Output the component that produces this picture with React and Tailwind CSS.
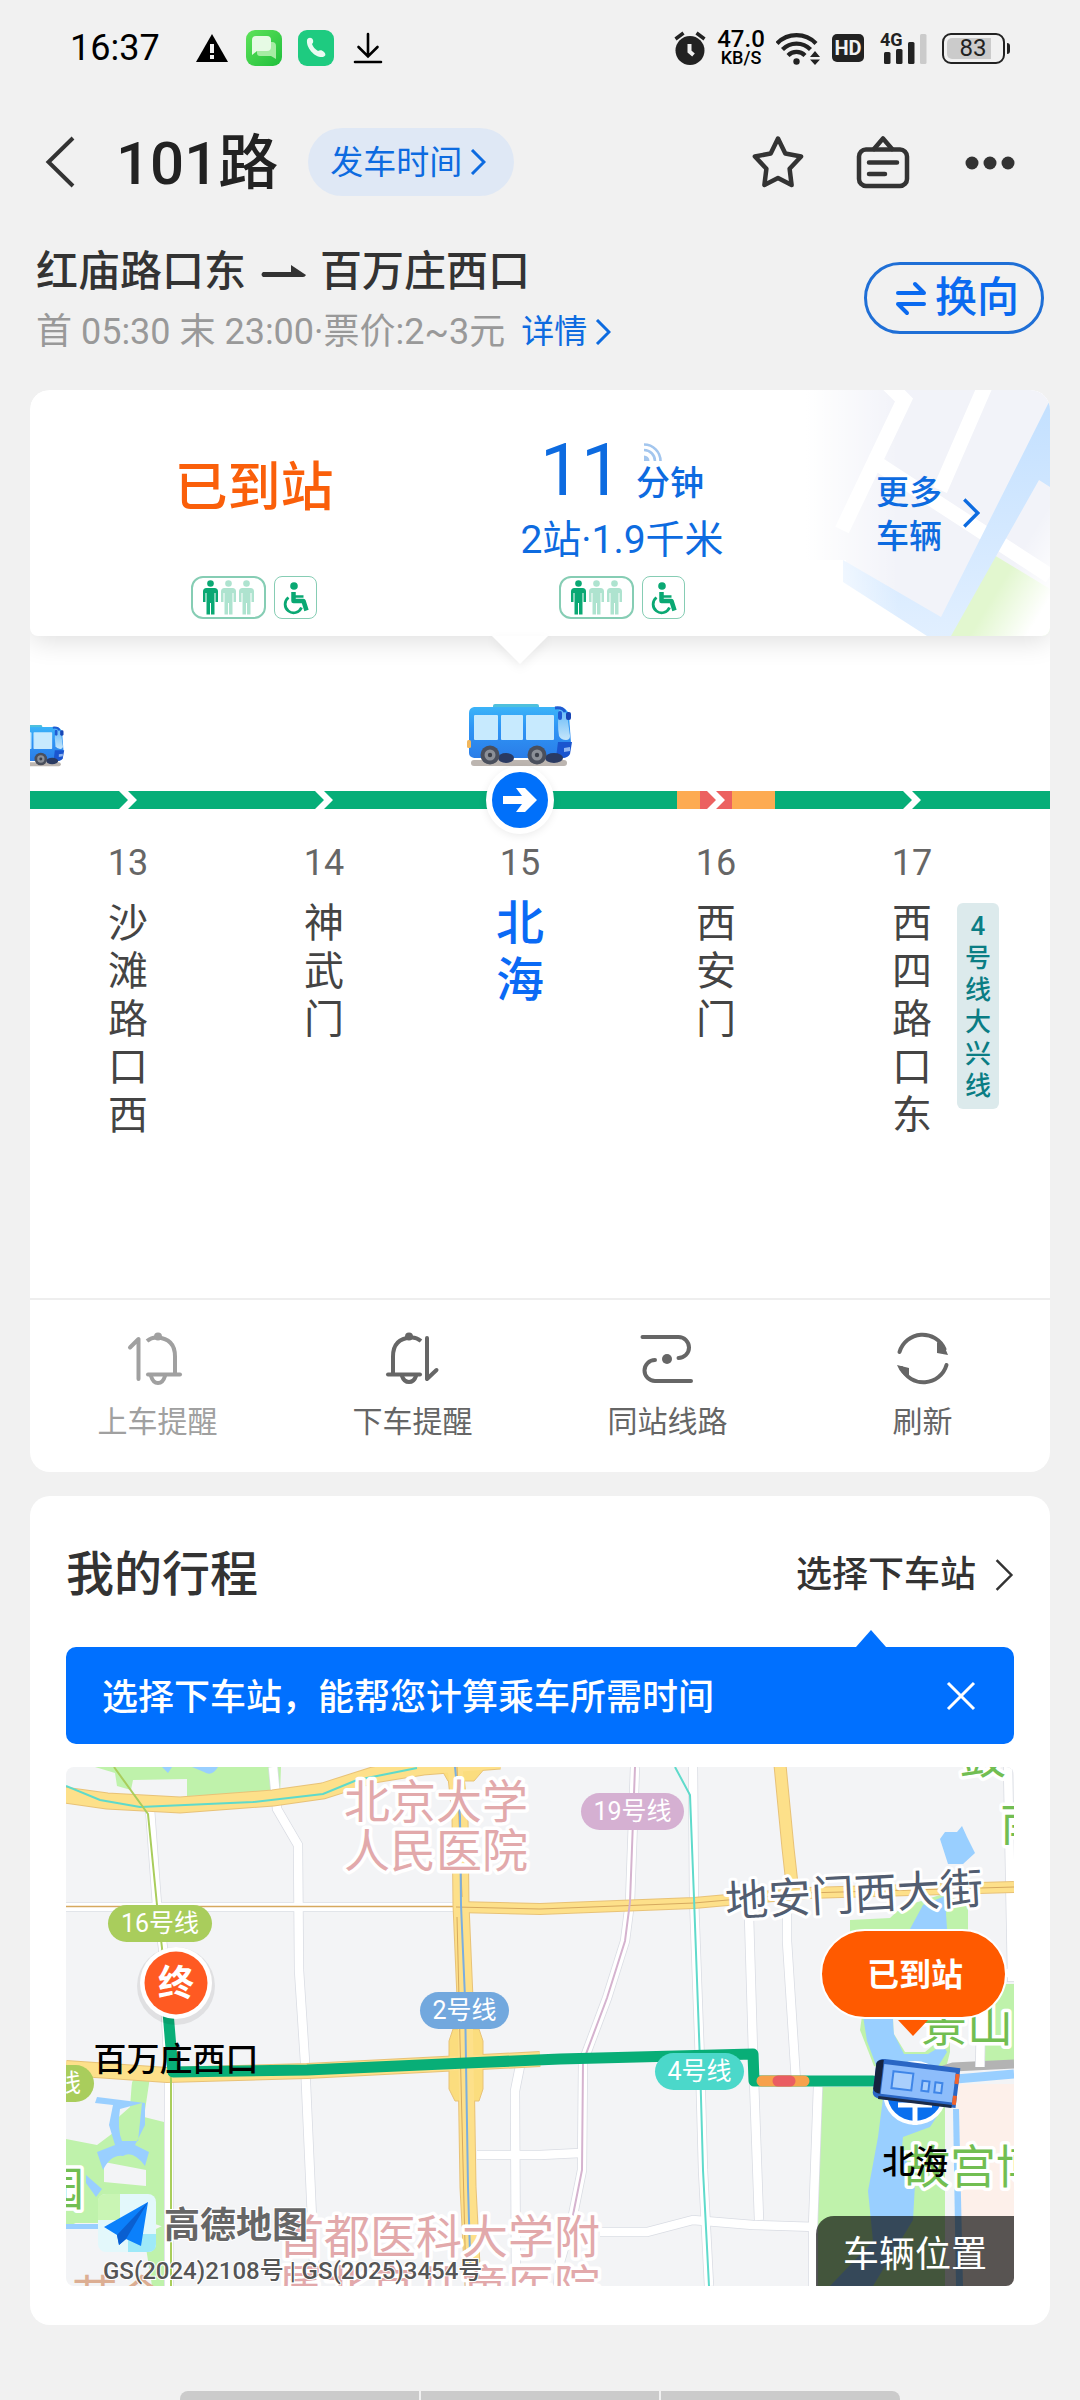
import React from "react";

const font = { fontFamily: 'Roboto, "Noto Sans CJK SC", sans-serif' };

function Chevron({ className, width = 3 }) {
  return (
    <svg viewBox="0 0 16 26" className={className} fill="none" stroke="currentColor" strokeWidth={width} aria-hidden="true">
      <path d="M2 1l12 12L2 25" />
    </svg>
  );
}

function StatusBar() {
  return (
    <div className="flex h-24 items-center justify-between pr-[70px] pl-[70px] text-black">
      <div className="flex items-center">
        <span className="text-[36px] leading-[40px]">16:37</span>
        <svg viewBox="0 0 32 28" className="ml-9 h-7 w-8" aria-hidden="true">
          <path d="M16 0l16 28H0z" fill="#000" />
          <path d="M14 10h4v9h-4zM14 21h4v4h-4z" fill="#f1f1f1" />
        </svg>
        <svg viewBox="0 0 36 36" className="ml-[18px] h-9 w-9" aria-hidden="true">
          <defs>
            <linearGradient id="msg" x1="0" y1="0" x2="1" y2="1">
              <stop offset="0" stopColor="#5fe35a" />
              <stop offset="1" stopColor="#1fbf3c" />
            </linearGradient>
          </defs>
          <rect width="36" height="36" rx="9" fill="url(#msg)" />
          <path d="M14 12h12q4 0 4 4v13l-5-3H14q-3 0-3-3v-8q0-3 3-3z" fill="#a6eca3" />
          <path d="M10 6h11q4 0 4 4v7q0 4-4 4H11l-5 4V10q0-4 4-4z" fill="#e6fae4" />
        </svg>
        <svg viewBox="0 0 36 36" className="ml-4 h-9 w-9" aria-hidden="true">
          <rect width="36" height="36" rx="9" fill="#1ecb80" />
          <path d="M9 10c1-3 5-3 6 0 .5 2 0 3-1 4 1 3 3 5 6 7 2-1 4-1 6 1s2 4-1 5c-8 1-17-9-16-17z" fill="#e9fbf2" />
        </svg>
        <svg viewBox="0 0 30 32" className="ml-[19px] h-8 w-[30px]" fill="none" stroke="#000" strokeWidth="2.6" strokeLinecap="round" aria-hidden="true">
          <path d="M15 2v22M5.500 15L15 24.500 24.500 15M2 30h26" />
        </svg>
      </div>
      <div className="flex items-center">
        <svg viewBox="0 0 32 34" className="h-[34px] w-8" aria-hidden="true">
          <circle cx="16" cy="19.500" r="14.500" fill="#222" />
          <path d="M1.500 8l8-6M30.500 8l-8-6" stroke="#222" strokeWidth="3.500" />
          <path d="M15.500 13v7.500l4 3.500" stroke="#f1f1f1" strokeWidth="4" fill="none" />
        </svg>
        <div className="ml-3 flex w-[46px] flex-col items-center font-medium">
          <span className="text-[24px] leading-[20px]">47.0</span>
          <span className="text-[18px] leading-[18px]">KB/S</span>
        </div>
        <svg viewBox="0 0 44 34" className="ml-3 h-[34px] w-11" aria-hidden="true">
          <g fill="none" stroke="#222" strokeWidth="4.200">
            <path d="M1 12.500a27 27 0 0 1 39 0" />
            <path d="M6.500 18.500a19.500 19.500 0 0 1 28 0" />
            <path d="M12 24.500a12 12 0 0 1 17 0" />
          </g>
          <circle cx="20.500" cy="30.500" r="3.200" fill="#222" />
          <path d="M34 26l5-6 5 6zM34 28.500l5 5.500 5-5.500z" fill="#222" />
        </svg>
        <span className="ml-3 flex h-7 w-8 items-center justify-center rounded-[5px] bg-[#222] text-[20px] leading-none font-bold text-[#f1f1f1]">HD</span>
        <div className="relative ml-4 h-8 w-12">
          <span className="absolute top-0 left-0 text-[18px] leading-[16px] font-bold text-[#222]">4G</span>
          <svg viewBox="0 0 48 32" className="h-8 w-12" aria-hidden="true">
            <g fill="#222">
              <rect x="4" y="20" width="6.500" height="12" rx="1.500" />
              <rect x="16" y="17" width="6.500" height="15" rx="1.500" />
              <rect x="28" y="10" width="6.500" height="22" rx="1.500" />
            </g>
            <rect x="40" y="2" width="6.500" height="30" rx="1.500" fill="#cbcbcb" />
          </svg>
        </div>
        <div className="ml-[14px] flex items-center">
          <span className="flex h-[31px] w-[63px] items-center rounded-[9px] border-2 border-[#222] p-[3px]">
            <span className="flex h-full w-[44px] items-center justify-center rounded-l-[5px] bg-[#cbcbcb] pl-2 text-[24px] leading-none text-[#222]">83</span>
          </span>
          <span className="ml-[2px] h-[11px] w-[3px] rounded-r bg-[#222]" />
        </div>
      </div>
    </div>
  );
}

function Header() {
  return (
    <header className="mt-8 flex h-[68px] items-center pr-[60px] pl-11 text-[#333]">
      <button aria-label="返回" className="flex h-14 w-8 items-center">
        <svg viewBox="0 0 32 56" className="h-14 w-8" fill="none" stroke="currentColor" strokeWidth="4" aria-hidden="true">
          <path d="M29 4L4.500 28 29 52" />
        </svg>
      </button>
      <h1 className="ml-10 pt-1 text-[60px] leading-[64px] font-medium text-[#222]">101路</h1>
      <button className="ml-[30px] flex h-[68px] items-center rounded-full bg-[#dfe8f5] pr-7 pl-[22px] text-[33px] leading-[40px] text-[#0d6be0]">
        <span className="pt-[2px]">发车时间</span>
        <Chevron className="ml-2 h-[26px] w-4" />
      </button>
      <div className="ml-auto flex items-center">
        <button aria-label="收藏">
          <svg viewBox="0 0 52 54" className="h-[54px] w-[52px]" fill="none" stroke="currentColor" strokeWidth="4.500" strokeLinejoin="round" aria-hidden="true">
            <path d="M26 3.500l7.300 15 15.800 3-11.500 12.200 2 16.300L26 43 12.400 50l2-16.300L2.900 21.500l15.800-3z" />
          </svg>
        </button>
        <button aria-label="站牌" className="ml-[52px]">
          <svg viewBox="0 0 54 54" className="h-[54px] w-[54px]" fill="none" stroke="currentColor" strokeWidth="4.500" strokeLinecap="round" strokeLinejoin="round" aria-hidden="true">
            <rect x="3" y="14.500" width="48" height="36.500" rx="7" />
            <path d="M18 14l9-10.500L36 14M13 27.500h28M13 39h16" />
          </svg>
        </button>
        <button aria-label="更多" className="ml-[50px]">
          <svg viewBox="0 0 60 54" className="h-[54px] w-[60px]" fill="currentColor" aria-hidden="true">
            <circle cx="12" cy="28" r="6.500" />
            <circle cx="30" cy="28" r="6.500" />
            <circle cx="48" cy="28" r="6.500" />
          </svg>
        </button>
      </div>
    </header>
  );
}

function RouteInfo() {
  return (
    <section className="mt-12 flex items-center justify-between pr-9 pl-9">
      <div>
        <h2 className="flex items-center pt-1 text-[42px] leading-[48px] font-medium text-[#333]">
          红庙路口东
          <svg viewBox="0 0 46 14" className="mx-[14px] h-[14px] w-[46px]" fill="currentColor" aria-hidden="true">
            <path d="M3 7h28V0l15 10q-1 2-3 2H3q-3-2.500 0-5z" />
          </svg>
          百万庄西口
        </h2>
        <p className="mt-4 flex items-center text-[36px] leading-[40px] text-[#999]">
          首 05:30 末 23:00·票价:2~3元
          <a href="#detail" className="ml-4 flex items-center text-[33px] text-[#0d6be0]">
            详情
            <Chevron className="ml-2 h-[26px] w-4" />
          </a>
        </p>
      </div>
      <button className="flex h-[72px] items-center rounded-full border-[3px] border-[#1f6fd6] pr-[22px] pl-[28px] text-[42px] leading-[48px] font-medium text-[#0a6af0]">
        <svg viewBox="0 0 32 36" className="mr-2 h-9 w-8" fill="none" stroke="currentColor" strokeWidth="4" strokeLinecap="round" strokeLinejoin="round" aria-hidden="true">
          <path d="M3 13h26l-9-9M29 24H3l9 9" />
        </svg>
        换向
      </button>
    </section>
  );
}

function Person({ x, color }) {
  return (
    <g fill={color} transform={`translate(${x} 0)`}>
      <circle cx="7.500" cy="3.500" r="3.300" />
      <path d="M3.500 8h8q3.500 0 3.500 3.500V22h-2.500v-9h-1v21.500H8V23H7v11.500H3.500V13h-1v9H0V11.500Q0 8 3.500 8z" />
    </g>
  );
}

function Badges() {
  return (
    <div className="flex items-center gap-2">
      <span className="flex h-[43px] w-[75px] items-center justify-center rounded-xl border-2 border-[#86cdb4]">
        <svg viewBox="0 0 51 36" className="h-9 w-[51px]" role="img" aria-label="车厢舒适">
          <Person x={0} color="#0aa873" />
          <Person x={18} color="#aee3cf" />
          <Person x={36} color="#aee3cf" />
        </svg>
      </span>
      <span className="flex h-[43px] w-[43px] items-center justify-center rounded-lg border border-[#86cdb4]">
        <svg viewBox="0 0 26 34" className="h-[34px] w-[26px]" fill="none" stroke="#0aa873" role="img" aria-label="无障碍">
          <circle cx="11" cy="5" r="3.800" fill="#0aa873" stroke="none" />
          <path d="M10.500 11v9h10l3 9.500" strokeWidth="4.500" strokeLinejoin="round" />
          <path d="M12 15.500h8.500" strokeWidth="2.500" />
          <path d="M5.500 16.500a8.500 8.500 0 1 0 13 10" strokeWidth="2.800" />
        </svg>
      </span>
    </div>
  );
}

function Arrivals() {
  return (
    <div className="relative flex h-[246px] rounded-b-lg bg-white pl-10 shadow-[0_4px_28px_rgba(0,0,0,0.14)]">
      <div className="flex flex-1 flex-col items-center justify-end pb-[17px]">
        <strong className="text-[53px] leading-[64px] font-medium text-[#fa5f0a]">已到站</strong>
        <div className="mt-14">
          <Badges />
        </div>
      </div>
      <div className="flex flex-1 flex-col items-center justify-end pb-[17px] text-[#0d6be0]">
        <div className="flex items-baseline">
          <span className="text-[73px] leading-[72px]">11</span>
          <span className="relative ml-[14px] text-[34px] leading-[40px] font-medium">
            分钟
            <svg viewBox="0 0 18 18" className="absolute bottom-full left-2 mb-[2px] h-[18px] w-[18px]" fill="none" stroke="#a3c6ee" strokeWidth="2.600" aria-hidden="true">
              <path d="M0 1.500A16.500 16.500 0 0 1 16.500 18M0 7a11 11 0 0 1 11 11" />
              <path d="M0 12.500A5.500 5.500 0 0 1 5.500 18H0z" fill="#a3c6ee" stroke="none" />
            </svg>
          </span>
        </div>
        <p className="mt-3 text-[39px] leading-[44px]">2站·1.9千米</p>
        <div className="mt-[14px]">
          <Badges />
        </div>
      </div>
      <button className="relative flex w-[244px] items-center overflow-hidden rounded-br-lg pl-[70px] text-left text-[#0d6be0]">
        <svg viewBox="0 0 244 246" className="absolute inset-0 h-full w-full" preserveAspectRatio="none" aria-hidden="true">
          <defs>
            <linearGradient id="fade" x1="0" x2="1">
              <stop offset="0" stopColor="#fff" />
              <stop offset="0.380" stopColor="#fff" stopOpacity="0" />
            </linearGradient>
            <linearGradient id="corner" x1="0.400" x2="1" y1="0.500" y2="1">
              <stop offset="0.300" stopColor="#fff" stopOpacity="0" />
              <stop offset="0.800" stopColor="#fff" />
            </linearGradient>
            <linearGradient id="band" x1="0" x2="0" y1="0" y2="1">
              <stop offset="0" stopColor="#c3e0ff" />
              <stop offset="1" stopColor="#e1efff" />
            </linearGradient>
          </defs>
          <rect width="244" height="246" fill="#f2f3f9" />
          <path d="M37 190l107 56H37zM0 170h40v76H0z" fill="#fff" />
          <path d="M188 165l56 34v47H140z" fill="#e2f7cf" />
          <path d="M78 -10l20 20L36 140M180 -6L134 100M72 74l172 112" fill="none" stroke="#fff" strokeWidth="15" />
          <path d="M150 150l94-60v156H130z" fill="url(#corner)" />
          <path d="M244 10L135 227 37 170v22l84 54h24L233 90l11 7z" fill="url(#band)" />
          <rect width="244" height="246" fill="url(#fade)" />
        </svg>
        <span className="relative w-[66px] pt-1 text-[33px] leading-[44px] font-medium">更多车辆</span>
        <Chevron className="relative ml-5 h-[30px] w-[18px]" />
      </button>
    </div>
  );
}

function Bus({ className }) {
  return (
    <svg viewBox="0 0 106 63" className={className} aria-hidden="true">
      <defs>
        <linearGradient id="bus" x1="0" x2="0" y1="0" y2="1">
          <stop offset="0" stopColor="#3bb4f8" />
          <stop offset="0.400" stopColor="#2f95f5" />
          <stop offset="1" stopColor="#2a7de8" />
        </linearGradient>
        <linearGradient id="shield" x1="0" x2="0" y1="0" y2="1">
          <stop offset="0" stopColor="#62b8f7" />
          <stop offset="1" stopColor="#c5e6fb" />
        </linearGradient>
      </defs>
      <rect x="4" y="56" width="96" height="6" rx="3" fill="#bcb5b0" />
      <rect x="26" y="0" width="46" height="6" rx="2" fill="#4fc0dc" />
      <path d="M7 3h84q9 0 11 8l2 28-3 12q-2 3-6 3H7q-5-1-5-5V9q0-5 5-6z" fill="url(#bus)" />
      <path d="M91 38h14l-2 12q-2 4-8 4h-6z" fill="#1a55cf" />
      <path d="M92 5l8 5 3 22q0 4-4 4-5 0-7-4-2-12 0-27z" fill="url(#shield)" />
      <path d="M88 4q8-1 10 4" stroke="#1f5bd2" strokeWidth="3" fill="none" />
      <rect x="99" y="8" width="5" height="8" rx="2" fill="#1746b5" />
      <rect x="91" y="7" width="4" height="9" rx="2" fill="#1f5bd2" />
      <path d="M8 12h22v23H8zM35 12h20v23H35zM60 12h26v23H60z" fill="#c7eafe" stroke="#c7eafe" strokeWidth="2" strokeLinejoin="round" />
      <rect x="0" y="36" width="4" height="8" rx="1.500" fill="#f2b75c" />
      <path d="M97 44l6-1v4l-6 1z" fill="#8fb5f2" />
      <ellipse cx="39" cy="54" rx="8" ry="5" fill="#2a3a62" />
      <ellipse cx="87" cy="54" rx="9" ry="5" fill="#2a3a62" />
      <circle cx="23" cy="51" r="9.500" fill="#4a4f5c" />
      <circle cx="23" cy="51" r="5.500" fill="#8b8f97" />
      <circle cx="23" cy="51" r="2.200" fill="#3c404a" />
      <circle cx="70" cy="51" r="9.500" fill="#4a4f5c" />
      <circle cx="70" cy="51" r="5.500" fill="#8b8f97" />
      <circle cx="70" cy="51" r="2.200" fill="#3c404a" />
    </svg>
  );
}

const stations = [
  { no: 13, name: "沙滩路口西" },
  { no: 14, name: "神武门" },
  { no: 15, name: "北海", current: true },
  { no: 16, name: "西安门", slow: true },
  { no: 17, name: "西四路口东", metro: "4号线大兴线" },
];

function Track({ station }) {
  return (
    <div className="relative flex h-[18px] flex-1 items-center justify-center bg-[#06ae78]">
      {station.slow && (
        <div className="absolute inset-y-0 left-[30%] flex w-1/2 bg-[#fdab52] pl-[23px]">
          <span className="w-8 bg-[#ec6160]" />
        </div>
      )}
      {station.current ? (
        <span className="absolute flex h-[68px] w-[68px] items-center justify-center rounded-full border-[6px] border-white bg-[#0070fa] shadow-[0_2px_8px_rgba(0,0,0,0.08)]">
          <svg viewBox="0 0 36 28" className="h-7 w-9" fill="#fff" aria-hidden="true">
            <path d="M1 10h19l-6-8h9l12 12-12 12h-9l6-8H1z" />
          </svg>
        </span>
      ) : (
        <svg viewBox="0 0 18 18" className="relative h-[18px] w-[18px]" fill="#fff" aria-hidden="true">
          <path d="M0 0h9l9 9-9 9H0l9-9z" />
        </svg>
      )}
    </div>
  );
}

function Stations() {
  return (
    <div className="relative">
      <div className="relative flex justify-center pr-10">
        <svg viewBox="0 0 56 28" className="h-7 w-14 drop-shadow-[0_4px_5px_rgba(0,0,0,0.06)]" fill="#fff" aria-hidden="true">
          <path d="M0 0h56L28 28z" />
        </svg>
      </div>
      <div className="relative mt-10 flex h-[63px] items-end justify-center overflow-hidden pr-10">
        <Bus className="absolute bottom-0 -left-9 h-[42px] w-[71px]" />
        <Bus className="h-[63px] w-[106px]" />
      </div>
      <div className="mt-6 flex">
        {stations.map((s) => (
          <Track key={s.no} station={s} />
        ))}
        <span className="w-10 bg-[#06ae78]" />
      </div>
      <ol className="flex pr-10 pb-[158px]">
        {stations.map((s) => (
          <li key={s.no} className="relative flex flex-1 flex-col items-center pt-[34px]">
            <span className="text-[36px] leading-[40px] text-[#666]">{s.no}</span>
            {s.current ? (
              <span className="mt-3 w-12 text-[48px] leading-[57px] font-medium break-all text-[#0a6af5]">{s.name}</span>
            ) : (
              <span className="mt-[17px] w-10 text-[40px] leading-[48px] break-all text-[#444]">{s.name}</span>
            )}
            {s.metro && (
              <span className="absolute top-[94px] left-1/2 ml-[45px] w-[42px] rounded-md bg-[#dceaec] px-2 py-[7px] text-center text-[26px] leading-8 font-medium break-all text-[#0a7d84]">
                {s.metro}
              </span>
            )}
          </li>
        ))}
      </ol>
    </div>
  );
}

const bellOn = (
  <g>
    <path d="M0 15.500L8.500 7v40" strokeLinejoin="round" />
    <path d="M17 9q5-4 10-3.500 18 1 18 19V42" strokeLinecap="butt" />
    <path d="M18 42.500h32" />
    <path d="M21 44q2 7 7 7t7-7" />
    <circle cx="28" cy="4.500" r="2" />
  </g>
);
const bellOff = (
  <g>
    <path d="M51.500 38L42 47V6" strokeLinejoin="round" />
    <path d="M36 9q-5-4-10-3.500-18 1-18 19V42" strokeLinecap="butt" />
    <path d="M35 42.500H3" />
    <path d="M17 44q2 6 7 6t7-6" />
    <circle cx="24" cy="4.500" r="2" />
  </g>
);
const sameStop = (
  <g>
    <path d="M2.500 5h36a10.500 10.500 0 0 1 0 21M15 28a10.500 10.500 0 0 0 0 21h36" />
    <circle cx="27" cy="27" r="5" fill="currentColor" stroke="none" />
  </g>
);
const refresh = (
  <g>
    <path d="M4.500 20a24 24 0 0 1 45-3M51.500 33a24 24 0 0 1-45 3" />
    <path d="M42 10v11l11 2q-3-10-11-13zM14 46V36L2 33q4 10 12 13z" fill="currentColor" stroke="none" />
  </g>
);

const actions = [
  { label: "上车提醒", icon: bellOn, muted: true },
  { label: "下车提醒", icon: bellOff },
  { label: "同站线路", icon: sameStop },
  { label: "刷新", icon: refresh },
];

function Actions() {
  return (
    <div className="grid grid-cols-4 border-t-2 border-[#eeeeee] pt-8 pb-[30px]">
      {actions.map((a) => (
        <button key={a.label} className={a.muted ? "flex flex-col items-center text-[#a0a0a0]" : "flex flex-col items-center text-[#666]"}>
          <svg viewBox="0 0 56 56" className="h-14 w-14 overflow-visible" fill="none" stroke="currentColor" strokeWidth="4" strokeLinecap="round" aria-hidden="true">
            {a.icon}
          </svg>
          <span className="mt-[14px] text-[30px] leading-[40px]">{a.label}</span>
        </button>
      ))}
    </div>
  );
}

function LinePill({ x, y, w, color, children }) {
  return (
    <g>
      <rect x={x} y={y} width={w} height="37" rx="18.500" fill={color} />
      <text x={x + w / 2} y={y + 27} textAnchor="middle" fontSize="25" fill="#fff">
        {children}
      </text>
    </g>
  );
}

const whiteRoads = [
  "M0 140H390",
  "M207 0l4 42 21 36 1 125 6 92 10 224",
  "M84 42l7 96 6 43 6 132v206",
  "M454 299l-5 25 1 195",
  "M411 388h63l40-2",
  "M569 0l-5 135-5 39-18 57-24 64-1 108-10 50-12 42-2 24",
  "M627 0l1 131 6 164 3 108 6 116",
  "M683 149l4 136 6 168",
  "M721 140v34l9 140",
  "M752 320l-5 140v59",
  "M534 465h47l46-12 60 5 63 2",
  "M942 0l2 106 2 104h10M946 206h-30l-2 94",
];

function RouteMap() {
  return (
    <svg viewBox="0 0 948 519" className="h-[519px] w-full" preserveAspectRatio="xMidYMid slice" role="img" aria-label="线路地图">
      <rect width="948" height="519" fill="#f3f4f6" />

      <g fill="#bff2ab">
        <path d="M29 0h186l-1 27-93 2v-17l-54 1-2 10-14-4-2-13z" />
        <path d="M784 153l40-2 12-11 38-12 28 7v32H784z" />
        <path d="M796 249l-2 14 14 36 30 10h40l6-24v-36z" />
        <path d="M752 320h127v199H747z" />
        <path d="M919 217h29v80h-29z" />
        <path d="M0 372l31 6 16-12 20-53 17-3-6 40 20 5v105l-54-18-44 18z" />
        <path d="M0 440h40v16H0zM78 468l24-12v63H86z" />
      </g>
      <path d="M50 310l16 4-2 26-16 14-24-2 8-10zM38 395l42 8v16l-42-4z" fill="#f3f4f6" />
      <path d="M892 317h56v202h-56z" fill="#fdf0ea" />

      <g fill="#99cfff">
        <path d="M96 0l10 0-4 6zM126 0h26q-6 10-14 5z" />
        <path d="M874 72l5-7h12l5-6 5 11 8 16-12 11h-15z" />
        <path d="M844 162l13-24 22-9 2 33z" />
        <path d="M797 249h30l1 18 10 20h24l15-9 4 7-10 16h-60l-10-27z" />
        <path d="M817 331l57 14-10 15-27 10-1 11 13 36-2 36-40 66h-43l43-45-5-50 10-54z" />
        <path d="M887 342l6 0 4 177h-7z" />
        <path d="M31 330l48 6 0 22-10 20 14 7-4 14q-12-16-22-10-12-2-20 14l-6-18 18-7-6-20 4-20-18-2zM54 342q-3 20 2 32h16l4-38z" fillRule="evenodd" />
        <path d="M20 408l16 14-6 8-10-14zM0 457h34v5H0z" />
      </g>
      <path d="M827 251h36l8 24-12 10h-20l-11-18z" fill="#f3f4f6" />
      <path d="M890 312l58-5" stroke="#99cfff" strokeWidth="9" fill="none" />
      <path d="M874 304l13-4 61-3" stroke="#b3b3b3" strokeWidth="9" fill="none" />

      <g fill="none" stroke="#d9dce3" strokeWidth="10">
        {whiteRoads.map((d) => (
          <path key={d} d={d} />
        ))}
      </g>
      <g fill="none" stroke="#fff" strokeWidth="8.500">
        {whiteRoads.map((d) => (
          <path key={d} d={d} />
        ))}
      </g>
      <path d="M0 139.500h390" stroke="#d6a95f" strokeWidth="1.500" />

      <g fill="none" stroke="#e8c277">
        <path d="M-2 28l43 6 73 4 93-7 50-7 50-16 50-8 77-6" strokeWidth="17" />
        <path d="M389 0l5 49 1 89 4 93 1 64 2 125 5 99" strokeWidth="17" />
        <path d="M390 140l84 2 154-6 113-10 207-6" strokeWidth="12" />
        <path d="M714 -2l8 83 4 36" strokeWidth="13" />
        <path d="M0 301l101 7 140-4 233-12" strokeWidth="16" />
      </g>
      <path d="M387 262l-4 12v48l6 12h24l4-12v-48l-4-12zM374 0h46l-12 14h-26z" fill="#fbdd7e" stroke="#e8c277" />
      <g fill="none" stroke="#fde08a">
        <path d="M-2 28l43 6 73 4 93-7 50-7 50-16 50-8 77-6" strokeWidth="15" />
        <path d="M389 0l5 49 1 89 4 93 1 64 2 125 5 99" strokeWidth="15" />
        <path d="M390 140l84 2 154-6 113-10 207-6" strokeWidth="10" />
        <path d="M714 -2l8 83 4 36" strokeWidth="11" />
        <path d="M0 301l101 7 140-4 233-12" strokeWidth="14" />
      </g>
      <path d="M390 140l84 2 154-6 113-10 207-6M391 0l5 130M391 150l9 369" fill="none" stroke="#d6a95f" strokeWidth="1" />

      <g fill="none" strokeWidth="2">
        <path d="M0 19l34 14 40 7 113-5 70-8 34-14 60-12M609 0l15 28 4 103 6 164 3 108 6 116" stroke="#5fdacb" />
        <path d="M48 0l34 47 9 91 5 43 9 132v206" stroke="#a9cd5c" />
        <path d="M389 0l5 49 1 89 4 93 1 64 2 125 3 99" stroke="#7aaee0" />
        <path d="M569 0l-5 135-5 39-18 57-24 64-1 108-10 50" stroke="#d5b3cf" />
      </g>

      <g fontSize="46" fill="#e2a9ab" stroke="#fff" strokeWidth="7" strokeLinejoin="round" paintOrder="stroke">
        <text x="278" y="51">北京大学</text>
        <text x="278" y="100">人民医院</text>
        <text x="212" y="486">首都医科大学附</text>
        <text x="212" y="536">属北京儿童医院</text>
      </g>
      <g fontSize="46" fill="#72be52" stroke="#fff" strokeWidth="7" strokeLinejoin="round" paintOrder="stroke">
        <text x="855" y="274">景山</text>
        <text x="838" y="416">故宫博</text>
        <text x="894" y="6">鼓</text>
        <text x="934" y="73">南</text>
        <text x="-28" y="438">园</text>
      </g>
      <text x="6" y="546" fontSize="46" fill="#dcae93">艺会</text>
      <text x="788" y="143" fontSize="43" fill="#525d70" stroke="#fff" strokeWidth="6" strokeLinejoin="round" paintOrder="stroke" textAnchor="middle" transform="rotate(-3 788 127)">
        地安门西大街
      </text>

      <g fill="none" strokeWidth="11" strokeLinejoin="round" strokeLinecap="round">
        <path d="M102 245l5 60 134-2 159-7 94-4 193-5 1 27h119" stroke="#08ae77" />
        <path d="M696 314h42" stroke="#f7a14b" />
        <path d="M712 314h12" stroke="#ea5d62" />
      </g>

      <LinePill x={42} y={138} w={104} color="#a9cd5c">16号线</LinePill>
      <LinePill x={354} y={225} w={89} color="#72a8de">2号线</LinePill>
      <LinePill x={515} y={26} w={103} color="#d5b0d2">19号线</LinePill>
      <LinePill x={589} y={286} w={89} color="#4bd8ca">4号线</LinePill>
      <LinePill x={-76} y={298} w={104} color="#a9cd5c">16号线</LinePill>

      <circle cx="110" cy="219" r="39" fill="#000" opacity="0.080" />
      <circle cx="110" cy="216" r="36" fill="#fff" />
      <circle cx="110" cy="216" r="31.500" fill="#ff5a22" />
      <text x="110" y="229" fontSize="36" fontWeight="700" fill="#fff" textAnchor="middle">终</text>
      <text x="110" y="304" fontSize="33" fontWeight="500" fill="#000" textAnchor="middle">百万庄西口</text>

      <circle cx="849" cy="326" r="32" fill="#fff" />
      <circle cx="849" cy="326" r="28" fill="#0a6fee" />
      <path d="M849 334v24M832 338h34" stroke="#fff" strokeWidth="5" />
      <g transform="translate(850 318) rotate(7)">
        <path d="M-42 -17q2-5 8-5h76v40h-76q-7 0-8-5z" fill="#2a66c4" />
        <path d="M-34 -17h72v30h-72z" fill="#8dbdfb" />
        <path d="M-42 -17q2-4 7-4v34q-6 0-7-4z" fill="#16233f" />
        <path d="M-36 17h74" stroke="#1b2b4a" strokeWidth="3" />
        <path d="M-24 -11h20v17h-20zM6 -5h7v10H6zM19 -5h7v10h-7z" fill="#a9cffc" stroke="#3f86e8" strokeWidth="2" />
        <path d="M40 -16v10M40 6v9" stroke="#f0642e" strokeWidth="4" />
      </g>
      <text x="849" y="407" fontSize="33" fontWeight="500" fill="#000" textAnchor="middle">北海</text>

      <path d="M799 163h97a44 44 0 0 1 0 88h-97a44 44 0 0 1 0-88z" fill="#ff5a00" stroke="#fff" strokeWidth="2" />
      <path d="M832 253h30l-15 16z" fill="#ff5a00" />
      <text x="849" y="219" fontSize="32" fontWeight="700" fill="#fff" textAnchor="middle">已到站</text>

      <rect x="32" y="427" width="58" height="58" rx="8" fill="#e3f8fb" />
      <path d="M32 435q0-8 8-8h14v26H32z" fill="#c9f5b4" />
      <path d="M62 467h28v10q0 8-8 8H62z" fill="#9ee9f8" />
      <path d="M38 460l44-25-7 44-15-7-7 6-2-10z" fill="#0b80fb" />
      <path d="M82 435L51 468l2 10 7-6z" fill="#0a5fd0" />
      <text x="98" y="471" fontSize="36" fontWeight="700" fill="#666" stroke="#fff" strokeWidth="2" paintOrder="stroke">高德地图</text>
      <text x="37" y="512" fontSize="24" fontWeight="500" fill="#555" stroke="#fff" strokeWidth="2" paintOrder="stroke">GS(2024)2108号 | GS(2025)3454号</text>
    </svg>
  );
}

function Trip() {
  return (
    <section className="mx-[30px] mt-6 rounded-[20px] bg-white px-9 pb-[39px]">
      <div className="flex h-[134px] items-center justify-between pt-6">
        <h2 className="text-[48px] leading-[56px] font-medium text-[#333]">我的行程</h2>
        <button className="flex items-center text-[36px] leading-[44px] font-medium text-[#333]">
          选择下车站
          <Chevron className="ml-[18px] h-8 w-5" width={2} />
        </button>
      </div>
      <div className="flex justify-end pr-32">
        <svg viewBox="0 0 30 17" className="h-[17px] w-[30px]" fill="#0070ff" aria-hidden="true">
          <path d="M15 0l15 17H0z" />
        </svg>
      </div>
      <div className="flex h-[97px] items-center justify-between rounded-[10px] bg-[#0070ff] pr-[38px] pl-9 text-white">
        <p className="pt-1 text-[36px] leading-[44px] font-medium">选择下车站，能帮您计算乘车所需时间</p>
        <button aria-label="关闭">
          <svg viewBox="0 0 30 30" className="h-[30px] w-[30px]" fill="none" stroke="currentColor" strokeWidth="3" aria-hidden="true">
            <path d="M2 2l26 26M28 2L2 28" />
          </svg>
        </button>
      </div>
      <div className="relative mt-[23px] overflow-hidden rounded-lg">
        <RouteMap />
        <button className="absolute right-0 bottom-0 h-[70px] rounded-tl-[18px] bg-black/65 px-[27px] pt-2 text-[36px] leading-[44px] text-white">车辆位置</button>
      </div>
    </section>
  );
}

export default function App() {
  return (
    <main className="flex min-h-screen flex-col bg-[#f1f1f1]" style={font}>
      <StatusBar />
      <Header />
      <RouteInfo />
      <section className="mx-[30px] mt-[38px] overflow-hidden rounded-[20px] bg-white">
        <Arrivals />
        <Stations />
        <Actions />
      </section>
      <Trip />
      <div className="mt-auto flex justify-center pt-8">
        <div className="grid h-[9px] w-2/3 grid-cols-3 gap-[2px] overflow-hidden rounded-t-lg">
          <span className="bg-[#cbcbcb]" />
          <span className="bg-[#cbcbcb]" />
          <span className="bg-[#cbcbcb]" />
        </div>
      </div>
    </main>
  );
}
